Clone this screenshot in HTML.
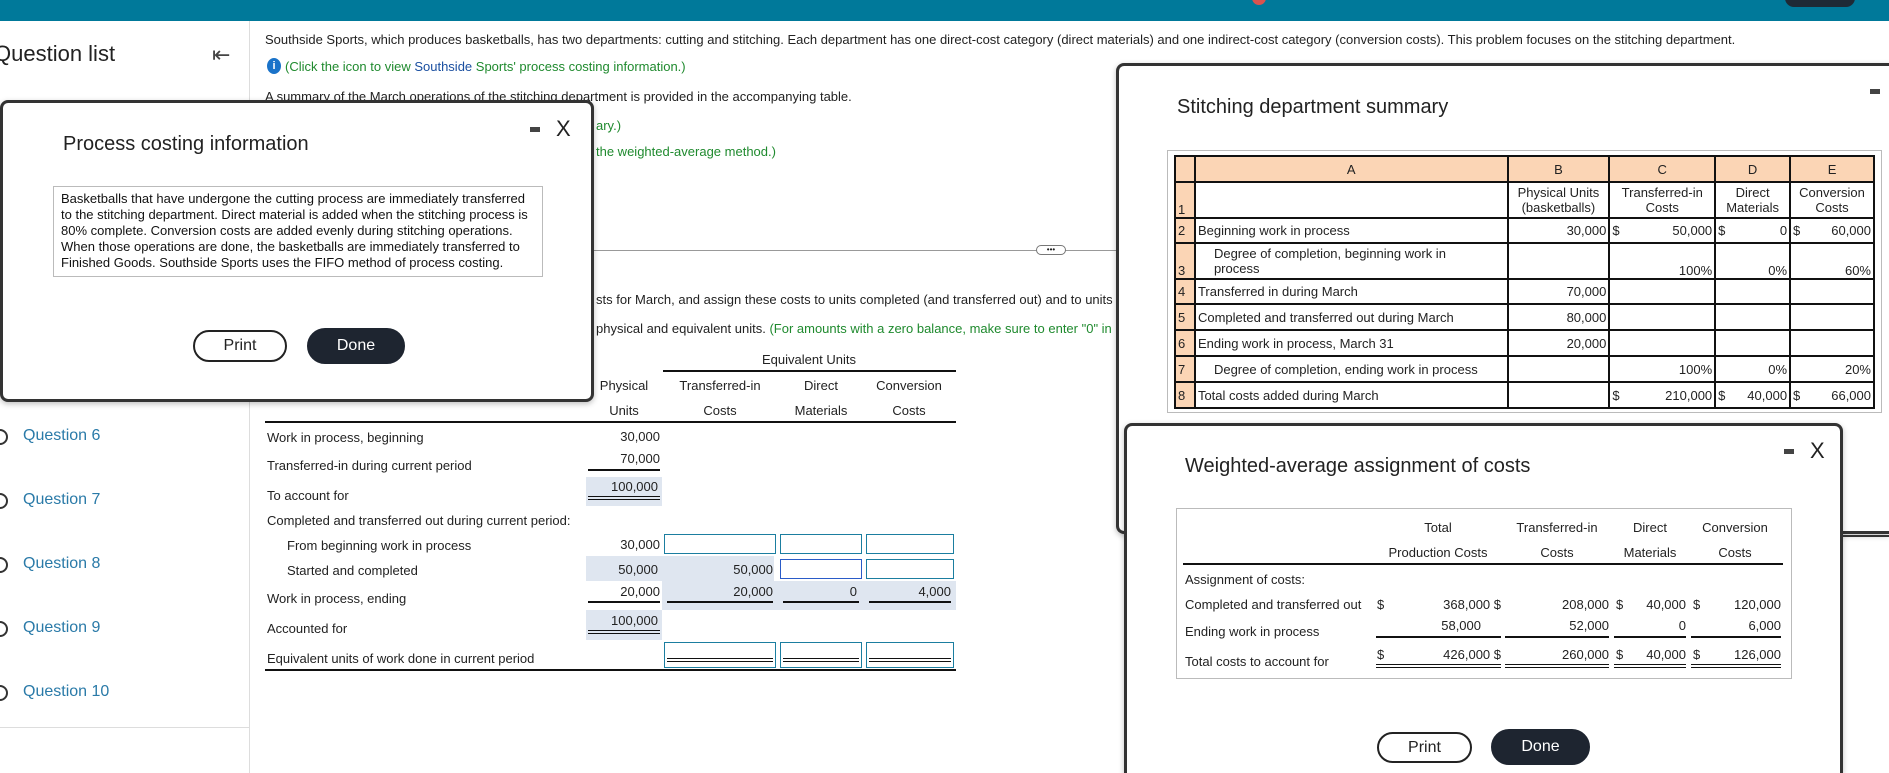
<!DOCTYPE html>
<html><head><meta charset="utf-8"><style>
*{margin:0;padding:0;box-sizing:border-box}
html{width:1889px;height:773px;overflow:hidden}
body{width:1889px;height:773px;position:relative;overflow:hidden;background:#fff;font-family:"Liberation Sans",Arial,sans-serif;font-size:13px;color:#222}
.t{position:absolute;white-space:nowrap;line-height:16px}
.r{text-align:right}
.c{text-align:center}
.g{color:#1f8a2e}
.q{color:#2a7aa8;font-size:16px}
.ln{position:absolute;background:#111;height:2px}
.sh{position:absolute;background:#dfe6f0}
.in{position:absolute;border:1.5px solid #1b7ea0;background:#fff}
.modal{position:absolute;background:#fff;border:3px solid #333;border-radius:8px;box-shadow:0 2px 6px rgba(0,0,0,.25)}
.btn{position:absolute;border:2px solid #222;border-radius:16px;font-size:16px;text-align:center}
table.ss{position:absolute;border-collapse:collapse;font-size:13px}
table.ss td{border:2px solid #111;padding:0 2px;line-height:15px}
table.ss td.h{background:#fbd5b5}
</style></head><body>
<div style="position:absolute;left:0;top:0;width:1889px;height:21px;background:#00799a"></div>
<div style="position:absolute;left:1785px;top:-12px;width:70px;height:19px;background:#1e2a36;border-radius:9px"></div>
<div style="position:absolute;left:1252px;top:-9px;width:14px;height:14px;background:#d9534f;border-radius:7px"></div>
<div style="position:absolute;left:249px;top:21px;width:1px;height:752px;background:#ddd"></div>
<div class="t" style="left:-6px;top:41px;font-size:22px;line-height:26px">Question list</div>
<div class="t" style="left:212px;top:42px;font-size:22px;line-height:26px;color:#444">&#8676;</div>
<div style="position:absolute;left:0;top:727px;width:249px;height:1px;background:#ddd"></div>
<div style="position:absolute;left:-8px;top:429px;width:16px;height:16px;border:2px solid #333;border-radius:50%"></div>
<div class="t q" style="left:23px;top:428px">Question 6</div>
<div style="position:absolute;left:-8px;top:493px;width:16px;height:16px;border:2px solid #333;border-radius:50%"></div>
<div class="t q" style="left:23px;top:492px">Question 7</div>
<div style="position:absolute;left:-8px;top:557px;width:16px;height:16px;border:2px solid #333;border-radius:50%"></div>
<div class="t q" style="left:23px;top:556px">Question 8</div>
<div style="position:absolute;left:-8px;top:621px;width:16px;height:16px;border:2px solid #333;border-radius:50%"></div>
<div class="t q" style="left:23px;top:620px">Question 9</div>
<div style="position:absolute;left:-8px;top:685px;width:16px;height:16px;border:2px solid #333;border-radius:50%"></div>
<div class="t q" style="left:23px;top:684px">Question 10</div>

<div class="t" style="left:265px;top:32px;font-size:13px">Southside Sports, which produces basketballs, has two departments: cutting and stitching. Each department has one direct-cost category (direct materials) and one indirect-cost category (conversion costs). This problem focuses on the stitching department.</div>
<div style="position:absolute;left:267px;top:58px;width:14px;height:16px;border-radius:50%;background:#1a73c9;color:#fff;font-size:11px;font-weight:bold;text-align:center;line-height:16px">i</div>
<div class="t g" style="left:285px;top:59px;font-size:13px">(Click the icon to view <span style="color:#1a4fa0">Southside</span> Sports' process costing information.)</div>
<div class="t" style="left:265px;top:89px;font-size:13px">A summary of the March operations of the stitching department is provided in the accompanying table.</div>
<div class="t g" style="left:596px;top:118px">ary.)</div>
<div class="t g" style="left:596px;top:144px">the weighted-average method.)</div>
<div style="position:absolute;left:593px;top:250px;width:530px;height:1px;background:#999"></div>
<div style="position:absolute;left:1036px;top:245px;width:30px;height:10px;border:1px solid #777;border-radius:5px;background:#fff;font-size:8px;line-height:7px;text-align:center">•••</div>
<div class="t" style="left:596px;top:292px">sts for March, and assign these costs to units completed (and transferred out) and to units</div>
<div class="t" style="left:596px;top:321px">physical and equivalent units. <span class="g">(For amounts with a zero balance, make sure to enter "0" in</span></div>

<div class="t c" style="left:709px;top:352px;width:200px">Equivalent Units</div>
<div class="ln" style="left:663px;top:370px;width:293px"></div>
<div class="t c" style="left:584px;top:378px;width:80px">Physical</div>
<div class="t c" style="left:670px;top:378px;width:100px">Transferred-in</div>
<div class="t c" style="left:781px;top:378px;width:80px">Direct</div>
<div class="t c" style="left:869px;top:378px;width:80px">Conversion</div>
<div class="t c" style="left:584px;top:403px;width:80px">Units</div>
<div class="t c" style="left:670px;top:403px;width:100px">Costs</div>
<div class="t c" style="left:781px;top:403px;width:80px">Materials</div>
<div class="t c" style="left:869px;top:403px;width:80px">Costs</div>
<div class="ln" style="left:265px;top:421px;width:691px"></div>

<div class="t" style="left:267px;top:430px">Work in process, beginning</div>
<div class="t r" style="left:580px;top:429px;width:80px">30,000</div>
<div class="t" style="left:267px;top:458px">Transferred-in during current period</div>
<div class="t r" style="left:580px;top:451px;width:80px">70,000</div>
<div class="ln" style="left:588px;top:469px;width:72px"></div>
<div class="sh" style="left:586px;top:477px;width:76px;height:29px"></div>
<div class="t r" style="left:578px;top:479px;width:80px">100,000</div>
<div style="position:absolute;left:588px;top:496px;width:72px;height:4px;border-top:1.5px solid #111;border-bottom:1.5px solid #111"></div>
<div class="t" style="left:267px;top:488px">To account for</div>
<div class="t" style="left:267px;top:513px">Completed and transferred out during current period:</div>
<div class="t" style="left:287px;top:538px">From beginning work in process</div>
<div class="t r" style="left:580px;top:537px;width:80px">30,000</div>
<div class="in" style="left:664px;top:534px;width:112px;height:20px"></div>
<div class="in" style="left:780px;top:534px;width:82px;height:20px"></div>
<div class="in" style="left:866px;top:534px;width:88px;height:20px"></div>
<div class="t" style="left:287px;top:563px">Started and completed</div>
<div class="sh" style="left:586px;top:556px;width:188px;height:25px"></div>
<div class="t r" style="left:578px;top:562px;width:80px">50,000</div>
<div class="t r" style="left:693px;top:562px;width:80px">50,000</div>
<div class="in" style="left:780px;top:559px;width:82px;height:20px;border-color:#2a5bc8"></div>
<div class="in" style="left:866px;top:559px;width:88px;height:20px"></div>
<div class="t" style="left:267px;top:591px">Work in process, ending</div>
<div class="sh" style="left:662px;top:581px;width:294px;height:29px"></div>
<div class="t r" style="left:580px;top:584px;width:80px">20,000</div>
<div class="t r" style="left:693px;top:584px;width:80px">20,000</div>
<div class="t r" style="left:777px;top:584px;width:80px">0</div>
<div class="t r" style="left:871px;top:584px;width:80px">4,000</div>
<div class="ln" style="left:588px;top:601px;width:72px"></div>
<div class="ln" style="left:667px;top:601px;width:106px"></div>
<div class="ln" style="left:783px;top:601px;width:76px"></div>
<div class="ln" style="left:869px;top:601px;width:82px"></div>
<div class="sh" style="left:586px;top:610px;width:76px;height:30px"></div>
<div class="t r" style="left:578px;top:613px;width:80px">100,000</div>
<div style="position:absolute;left:588px;top:630px;width:72px;height:4px;border-top:1.5px solid #111;border-bottom:1.5px solid #111"></div>
<div class="t" style="left:267px;top:621px">Accounted for</div>
<div class="t" style="left:267px;top:651px">Equivalent units of work done in current period</div>
<div class="in" style="left:664px;top:642px;width:112px;height:26px"><div style="position:absolute;left:2px;right:2px;top:15px;height:4px;border-top:1.5px solid #111;border-bottom:1.5px solid #111"></div></div>
<div class="in" style="left:780px;top:642px;width:82px;height:26px"><div style="position:absolute;left:2px;right:2px;top:15px;height:4px;border-top:1.5px solid #111;border-bottom:1.5px solid #111"></div></div>
<div class="in" style="left:866px;top:642px;width:88px;height:26px"><div style="position:absolute;left:2px;right:2px;top:15px;height:4px;border-top:1.5px solid #111;border-bottom:1.5px solid #111"></div></div>
<div class="ln" style="left:265px;top:669px;width:691px"></div>

<div class="modal" style="left:0;top:100px;width:594px;height:302px">
  <div class="t" style="left:60px;top:29px;font-size:20px;line-height:24px">Process costing information</div>
  <div style="position:absolute;left:527px;top:24px;width:10px;height:5px;background:#444"></div>
  <div class="t" style="left:553px;top:14px;font-size:22px;line-height:24px">X</div>
  <div style="position:absolute;left:50px;top:83px;width:490px;height:91px;border:1px solid #bbb;padding:4px 7px;font-size:13px;line-height:16px;color:#111">Basketballs that have undergone the cutting process are immediately transferred to the stitching department. Direct material is added when the stitching process is 80% complete. Conversion costs are added evenly during stitching operations. When those operations are done, the basketballs are immediately transferred to Finished Goods. Southside Sports uses the FIFO method of process costing.</div>
  <div class="btn" style="left:190px;top:227px;width:94px;height:32px;line-height:28px">Print</div>
  <div class="btn" style="left:304px;top:225px;width:98px;height:36px;line-height:32px;background:#1e2530;color:#fff;border-color:#1e2530;border-radius:18px">Done</div>
</div>

<div class="modal" style="left:1116px;top:63px;width:773px;height:471px;border-right:none;border-radius:8px 0 0 8px">
  <div class="t" style="left:58px;top:29px;font-size:20px;line-height:24px">Stitching department summary</div>
  <div style="position:absolute;left:751px;top:23px;width:10px;height:5px;background:#444"></div>
  <div style="position:absolute;left:48px;top:84px;width:715px;height:263px;border:1.5px solid #bbb"></div>
</div>
<table class="ss" style="left:1174px;top:155px;width:701px">
<colgroup><col style="width:20px"><col style="width:314px"><col style="width:102px"><col style="width:106px"><col style="width:75px"><col style="width:84px"></colgroup>
<tr style="height:26px"><td class="h"></td><td class="h c">A</td><td class="h c">B</td><td class="h c">C</td><td class="h c">D</td><td class="h c">E</td></tr>
<tr style="height:36px"><td class="h" style="vertical-align:bottom">1</td><td></td><td class="c">Physical Units<br>(basketballs)</td><td class="c">Transferred-in<br>Costs</td><td class="c">Direct<br>Materials</td><td class="c">Conversion<br>Costs</td></tr>
<tr style="height:25px"><td class="h">2</td><td>Beginning work in process</td><td class="r">30,000</td><td class="r"><span style="float:left">$</span>50,000</td><td class="r"><span style="float:left">$</span>0</td><td class="r"><span style="float:left">$</span>60,000</td></tr>
<tr style="height:36px"><td class="h" style="vertical-align:bottom">3</td><td style="padding-left:18px">Degree of completion, beginning work in<br>process</td><td></td><td class="r" style="vertical-align:bottom">100%</td><td class="r" style="vertical-align:bottom">0%</td><td class="r" style="vertical-align:bottom">60%</td></tr>
<tr style="height:25px"><td class="h">4</td><td>Transferred in during March</td><td class="r">70,000</td><td></td><td></td><td></td></tr>
<tr style="height:26px"><td class="h">5</td><td>Completed and transferred out during March</td><td class="r">80,000</td><td></td><td></td><td></td></tr>
<tr style="height:26px"><td class="h">6</td><td>Ending work in process, March 31</td><td class="r">20,000</td><td></td><td></td><td></td></tr>
<tr style="height:26px"><td class="h">7</td><td style="padding-left:18px">Degree of completion, ending work in process</td><td></td><td class="r">100%</td><td class="r">0%</td><td class="r">20%</td></tr>
<tr style="height:26px"><td class="h">8</td><td>Total costs added during March</td><td></td><td class="r"><span style="float:left">$</span>210,000</td><td class="r"><span style="float:left">$</span>40,000</td><td class="r"><span style="float:left">$</span>66,000</td></tr>
</table>

<div class="modal" style="left:1124px;top:423px;width:719px;height:350px;border-bottom:none;border-radius:8px 8px 0 0">
  <div class="t" style="left:58px;top:28px;font-size:20px;line-height:24px">Weighted-average assignment of costs</div>
  <div style="position:absolute;left:657px;top:23px;width:10px;height:5px;background:#444"></div>
  <div class="t" style="left:683px;top:13px;font-size:22px;line-height:24px">X</div>
  <div style="position:absolute;left:49px;top:82px;width:616px;height:171px;border:1.5px solid #bbb"></div>
  <div class="btn" style="left:250px;top:306px;width:95px;height:31px;line-height:27px">Print</div>
  <div class="btn" style="left:364px;top:303px;width:99px;height:36px;line-height:32px;background:#1e2530;color:#fff;border-color:#1e2530;border-radius:18px">Done</div>
</div>
<div class="t c" style="left:1388px;top:520px;width:100px">Total</div>
<div class="t c" style="left:1378px;top:545px;width:120px">Production Costs</div>
<div class="t c" style="left:1507px;top:520px;width:100px">Transferred-in</div>
<div class="t c" style="left:1507px;top:545px;width:100px">Costs</div>
<div class="t c" style="left:1610px;top:520px;width:80px">Direct</div>
<div class="t c" style="left:1610px;top:545px;width:80px">Materials</div>
<div class="t c" style="left:1695px;top:520px;width:80px">Conversion</div>
<div class="t c" style="left:1695px;top:545px;width:80px">Costs</div>
<div class="ln" style="left:1183px;top:563px;width:600px"></div>
<div class="t" style="left:1185px;top:572px">Assignment of costs:</div>
<div class="t" style="left:1185px;top:597px">Completed and transferred out</div>
<div class="t" style="left:1377px;top:597px">$</div>
<div class="t r" style="left:1421px;top:597px;width:80px">368,000 $</div>
<div class="t r" style="left:1529px;top:597px;width:80px">208,000</div><div class="t" style="left:1616px;top:597px">$</div>
<div class="t r" style="left:1606px;top:597px;width:80px">40,000</div><div class="t" style="left:1693px;top:597px">$</div>
<div class="t r" style="left:1701px;top:597px;width:80px">120,000</div>
<div class="t" style="left:1185px;top:624px">Ending work in process</div>
<div class="t r" style="left:1401px;top:618px;width:80px">58,000</div>
<div class="t r" style="left:1529px;top:618px;width:80px">52,000</div>
<div class="t r" style="left:1606px;top:618px;width:80px">0</div>
<div class="t r" style="left:1701px;top:618px;width:80px">6,000</div>
<div class="ln" style="left:1376px;top:636px;width:125px"></div>
<div class="ln" style="left:1505px;top:636px;width:104px"></div>
<div class="ln" style="left:1614px;top:636px;width:72px"></div>
<div class="ln" style="left:1691px;top:636px;width:90px"></div>
<div class="t" style="left:1185px;top:654px">Total costs to account for</div>
<div class="t" style="left:1377px;top:647px">$</div>
<div class="t r" style="left:1421px;top:647px;width:80px">426,000 $</div>
<div class="t r" style="left:1529px;top:647px;width:80px">260,000</div><div class="t" style="left:1616px;top:647px">$</div>
<div class="t r" style="left:1606px;top:647px;width:80px">40,000</div><div class="t" style="left:1693px;top:647px">$</div>
<div class="t r" style="left:1701px;top:647px;width:80px">126,000</div>
<div style="position:absolute;left:1376px;top:664px;width:125px;height:4px;border-top:1.5px solid #111;border-bottom:1.5px solid #111"></div>
<div style="position:absolute;left:1505px;top:664px;width:104px;height:4px;border-top:1.5px solid #111;border-bottom:1.5px solid #111"></div>
<div style="position:absolute;left:1614px;top:664px;width:72px;height:4px;border-top:1.5px solid #111;border-bottom:1.5px solid #111"></div>
<div style="position:absolute;left:1691px;top:664px;width:90px;height:4px;border-top:1.5px solid #111;border-bottom:1.5px solid #111"></div>
<div style="position:absolute;left:1843px;top:535px;width:46px;height:2px;background:#333"></div>
</body></html>
